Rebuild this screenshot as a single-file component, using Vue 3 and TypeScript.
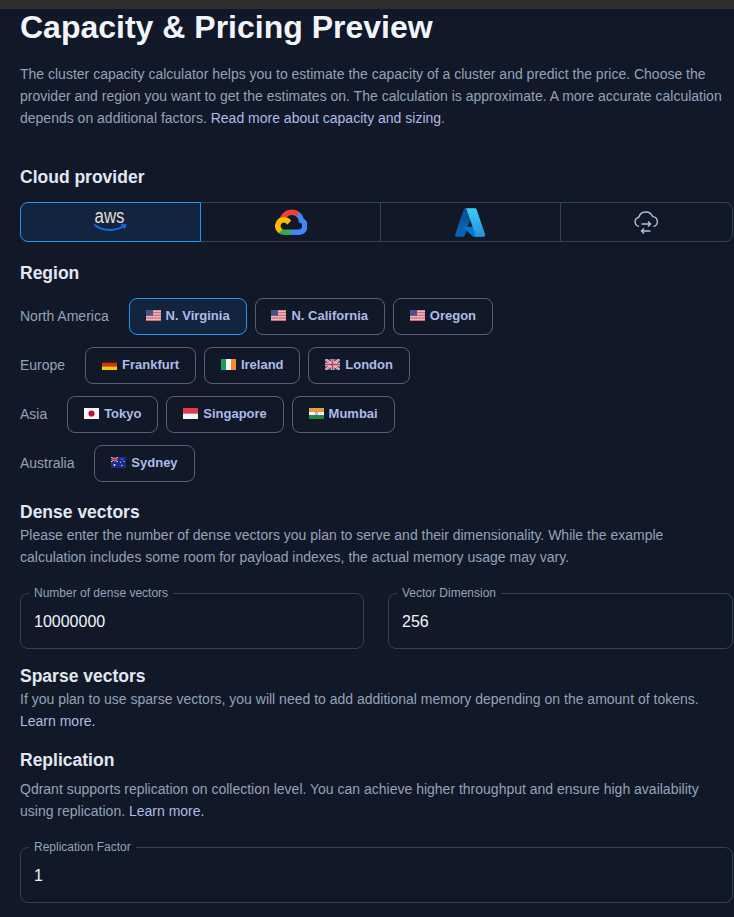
<script setup lang="ts">
import { ref } from 'vue';

interface Region {
  name: string;
  flag: string;
}

interface RegionGroup {
  label: string;
  regions: Region[];
}

const groups: RegionGroup[] = [
  {
    label: 'North America',
    regions: [
      { name: 'N. Virginia', flag: 'us' },
      { name: 'N. California', flag: 'us' },
      { name: 'Oregon', flag: 'us' },
    ],
  },
  {
    label: 'Europe',
    regions: [
      { name: 'Frankfurt', flag: 'de' },
      { name: 'Ireland', flag: 'ie' },
      { name: 'London', flag: 'gb' },
    ],
  },
  {
    label: 'Asia',
    regions: [
      { name: 'Tokyo', flag: 'jp' },
      { name: 'Singapore', flag: 'sg' },
      { name: 'Mumbai', flag: 'in' },
    ],
  },
  {
    label: 'Australia',
    regions: [{ name: 'Sydney', flag: 'au' }],
  },
];

const providers = ['aws', 'gcp', 'azure', 'hybrid'];

const provider = ref('aws');
const region = ref('N. Virginia');
const vectors = ref(10000000);
const dimension = ref(256);
const replication = ref(1);
</script>

<template>
  <div class="page">
    <div class="topbar"></div>
    <main class="content">
      <h1>Capacity &amp; Pricing Preview</h1>
      <p class="intro">
        The cluster capacity calculator helps you to estimate the capacity of a cluster and predict the price. Choose
        the provider and region you want to get the estimates on. The calculation is approximate. A more accurate
        calculation depends on additional factors. <a href="#">Read more about capacity and sizing</a>.
      </p>

      <h2 class="provider-title">Cloud provider</h2>
      <div class="tabs">
        <button
          v-for="item in providers"
          :key="item"
          type="button"
          class="tab"
          :class="{ active: provider === item }"
          @click="provider = item"
        >
          <svg v-if="item === 'aws'" width="36" height="32" viewBox="0 -3 36 32">
            <text x="1.500" y="13.500" textLength="30" lengthAdjust="spacingAndGlyphs" class="aws-text">aws</text>
            <path d="M2 16C9 22.500 23 22.500 31 16.800" fill="none" stroke="#0f6ff0" stroke-width="1.800" stroke-linecap="round" />
            <path d="M27.500 15.500L33.500 15L32 20z" fill="#0f6ff0" />
          </svg>
          <svg v-else-if="item === 'gcp'" width="32" height="26" viewBox="0.600 2.500 23 18.800">
            <path fill="#ea4335" d="M15.800 7.900h.7l2-2 .1-.9A9 9 0 0 0 4 9.400c.2-.1.7 0 .7 0l4-.7s.2-.3.3-.3a5 5 0 0 1 6.800-.5z" />
            <path fill="#4285f4" d="M21.300 9.400a9 9 0 0 0-2.700-4.400l-2.800 2.800a5 5 0 0 1 1.800 4v.5a2.500 2.500 0 1 1 0 5h-5l-.5.500v3l.5.500h5a6.500 6.500 0 0 0 3.700-11.900z" />
            <path fill="#34a853" d="M7.100 21.300h5v-4h-5c-.4 0-.7-.1-1-.2l-.7.2-2 2-.2.7a6.500 6.500 0 0 0 3.900 1.300z" />
            <path fill="#fbbc05" d="M7.100 8.300a6.500 6.500 0 0 0-3.900 11.700l2.900-2.900a2.500 2.500 0 1 1 3.300-3.300l2.900-2.900a6.500 6.500 0 0 0-5.200-2.600z" />
          </svg>
          <svg v-else-if="item === 'azure'" width="33" height="33" viewBox="1 0 96 96">
            <defs>
              <linearGradient id="az-a" x1="46" y1="7" x2="8" y2="90" gradientUnits="userSpaceOnUse">
                <stop offset="0" stop-color="#114a8b" />
                <stop offset="1" stop-color="#0669bc" />
              </linearGradient>
              <linearGradient id="az-b" x1="59" y1="5" x2="77" y2="88" gradientUnits="userSpaceOnUse">
                <stop offset="0" stop-color="#3ccbf4" />
                <stop offset="1" stop-color="#2892df" />
              </linearGradient>
            </defs>
            <path fill="url(#az-a)" d="M33.340 6.540h26.040l-27.030 80.100a4.150 4.150 0 0 1-3.940 2.810H8.150a4.140 4.140 0 0 1-3.930-5.470L29.400 9.380a4.150 4.150 0 0 1 3.940-2.830z" />
            <path fill="#0078d4" d="M71.170 60.260H29.880a1.910 1.910 0 0 0-1.300 3.310l26.530 24.760a4.170 4.170 0 0 0 2.850 1.120h23.380z" />
            <path fill="url(#az-b)" d="M66.600 9.360a4.140 4.140 0 0 0-3.930-2.820H33.650a4.150 4.150 0 0 1 3.930 2.820l25.180 74.620a4.150 4.150 0 0 1-3.930 5.480h29.020a4.150 4.150 0 0 0 3.930-5.480z" />
          </svg>
          <svg v-else width="26" height="26" viewBox="1 0 26 26" fill="none" stroke="#b4bfdc" stroke-width="1.400">
            <path d="M5.500 17.300A4.700 4.700 0 0 1 5.800 8.200 7.300 7.300 0 0 1 19.600 7.600 5 5 0 0 1 21 17.300" stroke-linecap="round" />
            <path d="M8.500 15h9M15 12.500l2.500 2.500-2.500 2.500" />
            <path d="M17.500 22h-9M11 19.500l-2.500 2.500 2.500 2.500" />
          </svg>
        </button>
      </div>

      <h2 class="region-title">Region</h2>
      <div class="region-list">
        <div v-for="group in groups" :key="group.label" class="region-row">
          <span class="region-label">{{ group.label }}</span>
          <button
            v-for="item in group.regions"
            :key="item.name"
            type="button"
            class="region"
            :class="{ active: region === item.name }"
            @click="region = item.name"
          >
            <svg class="flag" width="15" height="11" viewBox="0 0 15 11">
              <template v-if="item.flag === 'us'">
                <rect width="15" height="11" fill="#f4f5f8" />
                <path d="M0 .8h15M0 2.400h15M0 4h15M0 5.600h15M0 7.200h15M0 8.800h15M0 10.400h15" stroke="#cc4a55" stroke-width="0.900" />
                <rect width="7" height="5.600" fill="#4a4f8c" />
              </template>
              <template v-else-if="item.flag === 'de'">
                <rect width="15" height="3.700" fill="#1c1c1c" />
                <rect y="3.700" width="15" height="3.700" fill="#dd2a1b" />
                <rect y="7.400" width="15" height="3.600" fill="#f9c80e" />
              </template>
              <template v-else-if="item.flag === 'ie'">
                <rect width="5" height="11" fill="#1f9a5b" />
                <rect x="5" width="5" height="11" fill="#f5f5f5" />
                <rect x="10" width="5" height="11" fill="#f58b2d" />
              </template>
              <template v-else-if="item.flag === 'gb'">
                <rect width="15" height="11" fill="#3a4a8c" />
                <path d="M0 0L15 11M15 0L0 11" stroke="#f0f0f0" stroke-width="2.200" />
                <path d="M0 0L15 11M15 0L0 11" stroke="#d0404f" stroke-width="0.800" />
                <path d="M7.500 0V11M0 5.500H15" stroke="#f0f0f0" stroke-width="3.400" />
                <path d="M7.500 0V11M0 5.500H15" stroke="#d0404f" stroke-width="2" />
              </template>
              <template v-else-if="item.flag === 'jp'">
                <rect width="15" height="11" fill="#f6f6f6" />
                <circle cx="7.500" cy="5.500" r="3.100" fill="#c8102e" />
              </template>
              <template v-else-if="item.flag === 'sg'">
                <rect width="15" height="5.500" fill="#e8384a" />
                <rect y="5.500" width="15" height="5.500" fill="#f6f6f6" />
              </template>
              <template v-else-if="item.flag === 'in'">
                <rect width="15" height="3.700" fill="#f59a3a" />
                <rect y="3.700" width="15" height="3.700" fill="#f5f5f5" />
                <rect y="7.400" width="15" height="3.600" fill="#1f8a3c" />
                <circle cx="7.500" cy="5.500" r="1.200" fill="none" stroke="#2a3a8c" stroke-width="0.500" />
              </template>
              <template v-else>
                <rect width="15" height="11" fill="#1b2a8a" />
                <path d="M0 0L7 5M7 0L0 5" stroke="#e8e8f0" stroke-width="1" />
                <path d="M3.500 0V5M0 2.500H7" stroke="#d8343f" stroke-width="1.300" />
                <circle cx="3.500" cy="8" r="1" fill="#f0f0f5" />
                <circle cx="11" cy="2" r="0.600" fill="#f0f0f5" />
                <circle cx="13" cy="4.500" r="0.600" fill="#f0f0f5" />
                <circle cx="9.500" cy="5" r="0.600" fill="#f0f0f5" />
                <circle cx="11" cy="8.500" r="0.700" fill="#f0f0f5" />
              </template>
            </svg>
            {{ item.name }}
          </button>
        </div>
      </div>

      <h2 class="dense-title">Dense vectors</h2>
      <p class="note">
        Please enter the number of dense vectors you plan to serve and their dimensionality. While the example
        calculation includes some room for payload indexes, the actual memory usage may vary.
      </p>
      <div class="fields">
        <fieldset class="field">
          <legend>Number of dense vectors</legend>
          <input v-model.number="vectors" type="text" />
        </fieldset>
        <fieldset class="field">
          <legend>Vector Dimension</legend>
          <input v-model.number="dimension" type="text" />
        </fieldset>
      </div>

      <h2 class="sparse-title">Sparse vectors</h2>
      <p class="note">
        If you plan to use sparse vectors, you will need to add additional memory depending on the amount of tokens.
        <a href="#">Learn more.</a>
      </p>

      <h2 class="replication-title">Replication</h2>
      <p class="note replication-note">
        Qdrant supports replication on collection level. You can achieve higher throughput and ensure high availability
        using replication. <a href="#">Learn more.</a>
      </p>
      <fieldset class="field">
        <legend>Replication Factor</legend>
        <input v-model.number="replication" type="text" />
      </fieldset>
    </main>
  </div>
</template>

<style>
html,
body {
  margin: 0;
  background: #111827;
}
</style>

<style scoped>
.page {
  height: 917px;
  overflow: hidden;
  background: #111827;
  font-family: 'Liberation Sans', Arial, sans-serif;
  color: #94a3b8;
}

.topbar {
  height: 9px;
  background: #2e2e2e;
}

.content {
  padding: 0 1px 0 20px;
}

h1 {
  margin: 0;
  font-size: 32px;
  line-height: 36px;
  font-weight: 700;
  color: #f1f5f9;
}

h2 {
  margin: 0;
  font-size: 17.500px;
  line-height: 24px;
  font-weight: 700;
  color: #e2e8f0;
}

p {
  margin: 0;
  font-size: 14px;
  line-height: 22px;
}

a {
  color: #aebbe6;
  text-decoration: none;
}

.intro {
  margin-top: 18px;
}

.provider-title {
  margin-top: 36px;
}

.tabs {
  display: grid;
  grid-template-columns: 181px 180px 180px 172px;
  height: 40px;
  margin-top: 13px;
}

.tab {
  display: flex;
  align-items: center;
  justify-content: center;
  padding: 0;
  margin-left: -1px;
  background: transparent;
  border: 1px solid #334155;
  cursor: pointer;
}

.tab:first-child {
  margin-left: 0;
  border-radius: 8px 0 0 8px;
}

.tab:last-child {
  border-radius: 0 8px 8px 0;
}

.tab.active {
  position: relative;
  background: #13243e;
  border-color: #2196f3;
}

.aws-text {
  font-family: 'Liberation Sans', Arial, sans-serif;
  font-size: 20px;
  fill: #e2ddd6;
}

.region-title {
  margin-top: 19px;
}

.region-list {
  display: flex;
  flex-direction: column;
  gap: 12.250px;
  margin-top: 13px;
}

.region-row {
  display: flex;
  align-items: center;
  gap: 8px;
}

.region-label {
  margin-right: 12px;
  font-size: 14px;
}

.region {
  display: flex;
  align-items: center;
  gap: 5px;
  height: 36.750px;
  padding: 0 15.900px 2px;
  background: transparent;
  border: 1px solid #566079;
  border-radius: 8px;
  font-family: inherit;
  font-size: 13px;
  font-weight: 700;
  color: #aebbe6;
  cursor: pointer;
}

.region.active {
  background: #13243e;
  border-color: #2196f3;
}

.dense-title {
  margin-top: 18px;
}

.note {
  color: #94a3b8;
}

.fields {
  display: grid;
  grid-template-columns: 344px 345px;
  gap: 24px;
  margin-top: 19px;
}

.field {
  min-width: 0;
  height: 62px;
  box-sizing: border-box;
  margin: 0;
  padding: 0 13px;
  border: 1px solid #334155;
  border-radius: 8px;
}

.field legend {
  padding: 0 5px 2px;
  margin-left: -5px;
  font-size: 12px;
  line-height: 12px;
  color: #94a3b8;
}

.field input {
  display: block;
  width: 100%;
  height: 42px;
  padding: 0;
  background: transparent;
  border: 0;
  outline: 0;
  font-family: inherit;
  font-size: 16px;
  color: #f1f5f9;
}

.sparse-title {
  margin-top: 15px;
}

.replication-title {
  margin-top: 16px;
}

.replication-note {
  margin-top: 6px;
  margin-bottom: 19px;
}
</style>
